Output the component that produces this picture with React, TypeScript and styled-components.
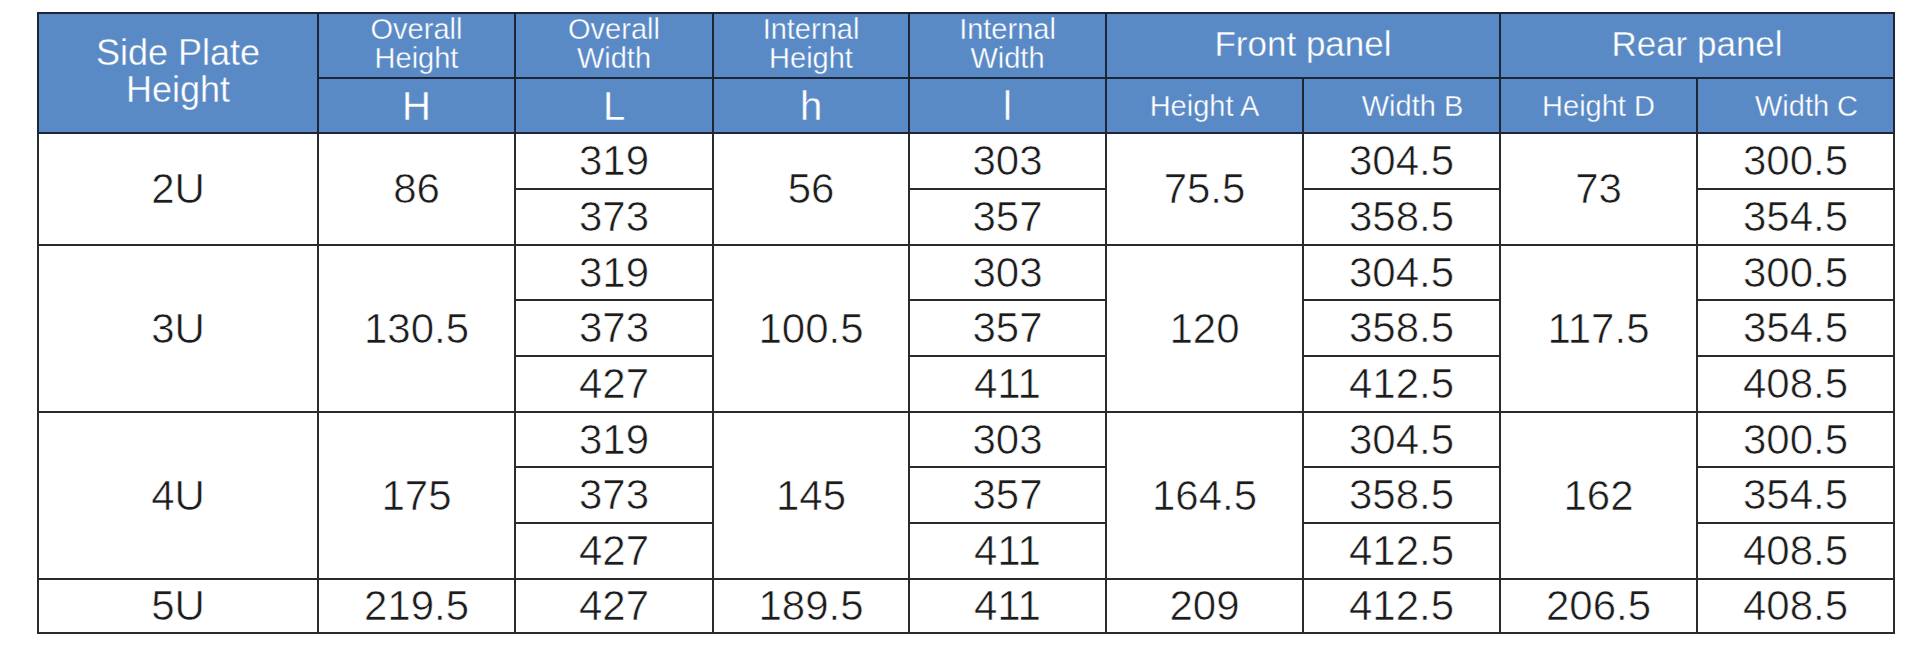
import React from "react";
import styled, { createGlobalStyle } from "styled-components";

const GlobalStyle = createGlobalStyle`
  html, body {
    margin: 0;
    padding: 0;
    background: #ffffff;
  }
  body {
    font-family: "Liberation Sans", Arial, sans-serif;
  }
`;

const Page = styled.div`
  padding: 12px 0 0 37px;
  width: 1920px;
  height: 662px;
  box-sizing: border-box;
  background: #ffffff;
`;

const Table = styled.table`
  border-collapse: collapse;
  table-layout: fixed;
  width: 1858px;
  border: 2px solid #2b2b2b;
  font-family: "Liberation Sans", Arial, sans-serif;
`;

const HeadRow = styled.tr<{ $h: number }>`
  height: ${(p) => p.$h}px;
`;

const HeadCell = styled.th<{ $size: number; $shift?: number; $lh: number; $lift?: number }>`
  background: #5a8ac6;
  color: #ffffff;
  font-weight: 400;
  font-size: ${(p) => p.$size}px;
  line-height: ${(p) => p.$lh}px;
  border: 2px solid #1d2536;
  padding: 0 0 ${(p) => p.$lift ?? 0}px ${(p) => p.$shift ?? 0}px;
  text-align: center;
  vertical-align: middle;
  white-space: nowrap;
  -webkit-text-stroke: 0.35px #5a8ac6;
`;

const BodyRow = styled.tr<{ $h: number }>`
  height: ${(p) => p.$h}px;
`;

const BodyCell = styled.td`
  color: #1c1c1c;
  font-size: 42px;
  line-height: 1;
  border: 2px solid #2b2b2b;
  padding: 0;
  text-align: center;
  vertical-align: middle;
  white-space: nowrap;
  -webkit-text-stroke: 0.6px #ffffff;
`;

const colWidths = [280, 197, 198, 196, 197, 197, 197, 197, 197];

type Group = {
  label: string;
  H: string;
  h: string;
  A: string;
  D: string;
  rows: { L: string; l: string; B: string; C: string }[];
};

const groups: Group[] = [
  {
    label: "2U",
    H: "86",
    h: "56",
    A: "75.5",
    D: "73",
    rows: [
      { L: "319", l: "303", B: "304.5", C: "300.5" },
      { L: "373", l: "357", B: "358.5", C: "354.5" },
    ],
  },
  {
    label: "3U",
    H: "130.5",
    h: "100.5",
    A: "120",
    D: "117.5",
    rows: [
      { L: "319", l: "303", B: "304.5", C: "300.5" },
      { L: "373", l: "357", B: "358.5", C: "354.5" },
      { L: "427", l: "411", B: "412.5", C: "408.5" },
    ],
  },
  {
    label: "4U",
    H: "175",
    h: "145",
    A: "164.5",
    D: "162",
    rows: [
      { L: "319", l: "303", B: "304.5", C: "300.5" },
      { L: "373", l: "357", B: "358.5", C: "354.5" },
      { L: "427", l: "411", B: "412.5", C: "408.5" },
    ],
  },
  {
    label: "5U",
    H: "219.5",
    h: "189.5",
    A: "209",
    D: "206.5",
    rows: [{ L: "427", l: "411", B: "412.5", C: "408.5" }],
  },
];

const rowHeights = [56, 56, 55, 56, 56, 55, 56, 56, 54];

const twoLine = [
  ["Overall", "Height"],
  ["Overall", "Width"],
  ["Internal", "Height"],
  ["Internal", "Width"],
];

const symbols = ["H", "L", "h", "l"];

export default function App() {
  let rowIndex = 0;
  return (
    <>
      <GlobalStyle />
      <Page>
        <Table>
          <colgroup>
            {colWidths.map((w, i) => (
              <col key={i} style={{ width: w }} />
            ))}
          </colgroup>
          <thead>
            <HeadRow $h={65}>
              <HeadCell rowSpan={2} $size={36} $lh={37} $lift={4}>
                Side Plate
                <br />
                Height
              </HeadCell>
              {twoLine.map(([a, b]) => (
                <HeadCell key={a + b} $size={29} $lh={29} $lift={3}>
                  {a}
                  <br />
                  {b}
                </HeadCell>
              ))}
              <HeadCell colSpan={2} $size={35} $lh={36} $lift={4}>
                Front panel
              </HeadCell>
              <HeadCell colSpan={2} $size={35} $lh={36} $lift={4}>
                Rear panel
              </HeadCell>
            </HeadRow>
            <HeadRow $h={55}>
              {symbols.map((s) => (
                <HeadCell key={s} $size={40} $lh={40}>
                  {s}
                </HeadCell>
              ))}
              <HeadCell $size={29} $lh={30}>Height A</HeadCell>
              <HeadCell $size={29} $lh={30} $shift={22}>Width B</HeadCell>
              <HeadCell $size={29} $lh={30}>Height D</HeadCell>
              <HeadCell $size={29} $lh={30} $shift={22}>Width C</HeadCell>
            </HeadRow>
          </thead>
          <tbody>
            {groups.map((g) =>
              g.rows.map((r, i) => {
                const h = rowHeights[rowIndex++];
                const span = g.rows.length;
                return (
                  <BodyRow key={g.label + i} $h={h}>
                    {i === 0 && <BodyCell rowSpan={span}>{g.label}</BodyCell>}
                    {i === 0 && <BodyCell rowSpan={span}>{g.H}</BodyCell>}
                    <BodyCell>{r.L}</BodyCell>
                    {i === 0 && <BodyCell rowSpan={span}>{g.h}</BodyCell>}
                    <BodyCell>{r.l}</BodyCell>
                    {i === 0 && <BodyCell rowSpan={span}>{g.A}</BodyCell>}
                    <BodyCell>{r.B}</BodyCell>
                    {i === 0 && <BodyCell rowSpan={span}>{g.D}</BodyCell>}
                    <BodyCell>{r.C}</BodyCell>
                  </BodyRow>
                );
              })
            )}
          </tbody>
        </Table>
      </Page>
    </>
  );
}
